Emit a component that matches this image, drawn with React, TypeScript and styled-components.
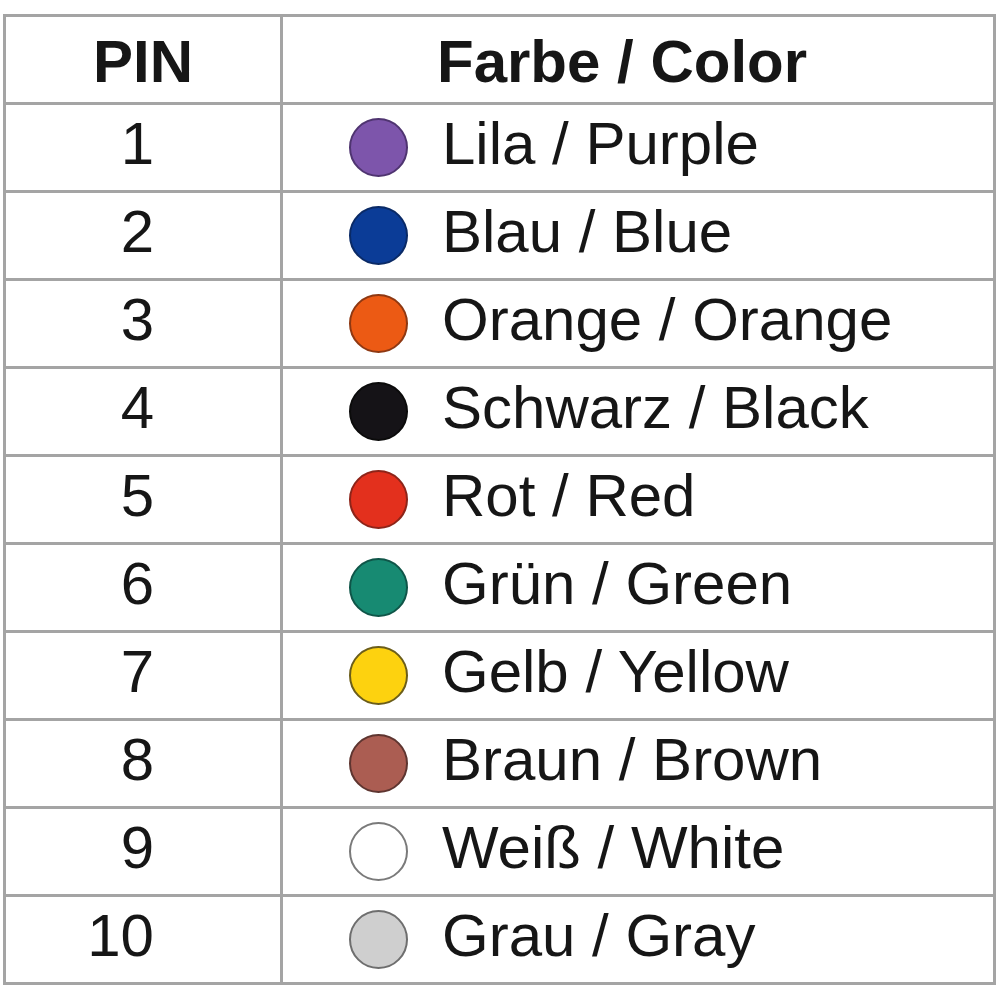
import React from 'react';
import styled, { createGlobalStyle } from 'styled-components';

interface PinColor {
  pin: number;
  label: string;
  fill: string;
  ring: string;
}

const pins: PinColor[] = [
  { pin: 1, label: 'Lila / Purple', fill: '#7d55ab', ring: '#4f3470' },
  { pin: 2, label: 'Blau / Blue', fill: '#0b3c97', ring: '#0a2a66' },
  { pin: 3, label: 'Orange / Orange', fill: '#ec5a14', ring: '#8e3812' },
  { pin: 4, label: 'Schwarz / Black', fill: '#151317', ring: '#0b0b0b' },
  { pin: 5, label: 'Rot / Red', fill: '#e3301d', ring: '#8d2419' },
  { pin: 6, label: 'Grün / Green', fill: '#178a72', ring: '#0f5548' },
  { pin: 7, label: 'Gelb / Yellow', fill: '#fdd20f', ring: '#6b5d1a' },
  { pin: 8, label: 'Braun / Brown', fill: '#ab5d52', ring: '#5e3530' },
  { pin: 9, label: 'Weiß / White', fill: '#ffffff', ring: '#7a7a7a' },
  { pin: 10, label: 'Grau / Gray', fill: '#cfcfcf', ring: '#6e6e6e' },
];

const GlobalStyle = createGlobalStyle`
  html, body {
    margin: 0;
    padding: 0;
    background: #ffffff;
  }
  body {
    font-family: "Liberation Sans", Arial, sans-serif;
    color: #161616;
  }
`;

const Table = styled.div`
  display: grid;
  grid-template-columns: 274px 710px;
  grid-auto-rows: 85px;
  gap: 3px;
  padding: 3px;
  margin: 14px 0 0 3px;
  width: max-content;
  background: #a4a4a4;
`;

const Cell = styled.div`
  background: #ffffff;
  display: flex;
  align-items: center;
  font-size: 60px;
  line-height: 1;
  white-space: nowrap;
`;

const HeadCell = styled(Cell)<{ $center?: boolean }>`
  font-weight: 700;
  justify-content: ${p => (p.$center ? 'center' : 'flex-start')};
  padding-left: ${p => (p.$center ? '0' : '154px')};
  padding-top: 4px;
`;

const PinCell = styled(Cell)`
  justify-content: flex-end;
  padding-right: 126px;
  padding-bottom: 8px;
`;

const ColorCell = styled(Cell)`
  padding-left: 66px;
  gap: 34px;
`;

const Dot = styled.span<{ $fill: string; $ring: string }>`
  flex: none;
  width: 59px;
  height: 59px;
  border-radius: 50%;
  box-sizing: border-box;
  background: ${p => p.$fill};
  border: 2px solid ${p => p.$ring};
`;

const Label = styled.span`
  padding-bottom: 8px;
`;

export default function App() {
  return (
    <>
      <GlobalStyle />
      <Table>
        <HeadCell $center>PIN</HeadCell>
        <HeadCell>Farbe / Color</HeadCell>
        {pins.map(p => (
          <React.Fragment key={p.pin}>
            <PinCell>{p.pin}</PinCell>
            <ColorCell>
              <Dot $fill={p.fill} $ring={p.ring} />
              <Label>{p.label}</Label>
            </ColorCell>
          </React.Fragment>
        ))}
      </Table>
    </>
  );
}
